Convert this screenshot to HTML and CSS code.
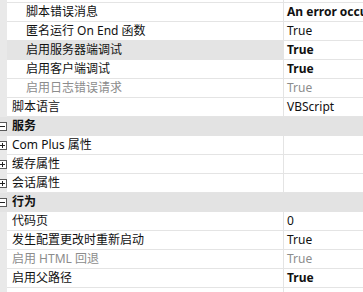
FILE: index.html
```html
<!DOCTYPE html>
<html>
<head>
<meta charset="utf-8">
<link rel="stylesheet" href="styles.css">
</head>
<body>
<div class="grid">
  <div class="row"><div class="strip"></div><div class="name l2"></div><div class="value"></div></div>
  <div class="row"><div class="strip"></div><div class="name l2">脚本错误消息</div><div class="value bold">An error occurred on the server when processing the URL.</div></div>
  <div class="row"><div class="strip"></div><div class="name l2">匿名运行 On End 函数</div><div class="value">True</div></div>
  <div class="row"><div class="strip"></div><div class="name l2 sel">启用服务器端调试</div><div class="value bold">True</div></div>
  <div class="row"><div class="strip"></div><div class="name l2">启用客户端调试</div><div class="value bold">True</div></div>
  <div class="row"><div class="strip"></div><div class="name l2 dis">启用日志错误请求</div><div class="value dis">True</div></div>
  <div class="row"><div class="strip"></div><div class="name l1">脚本语言</div><div class="value">VBScript</div></div>
  <div class="row cat"><div class="strip"><svg class="tog" width="9" height="9" viewBox="0 0 9 9"><rect x="0.5" y="0.5" width="8" height="8" fill="#fff" stroke="#5a5a5a"/><path d="M2 4.5h5" stroke="#222"/></svg></div><div class="name l1 bold">服务</div><div class="value"></div></div>
  <div class="row"><div class="strip"><svg class="tog" width="9" height="9" viewBox="0 0 9 9"><rect x="0.5" y="0.5" width="8" height="8" fill="#fff" stroke="#5a5a5a"/><path d="M2 4.5h5M4.5 2v5" stroke="#222"/></svg></div><div class="name l1">Com Plus 属性</div><div class="value"></div></div>
  <div class="row"><div class="strip"><svg class="tog" width="9" height="9" viewBox="0 0 9 9"><rect x="0.5" y="0.5" width="8" height="8" fill="#fff" stroke="#5a5a5a"/><path d="M2 4.5h5M4.5 2v5" stroke="#222"/></svg></div><div class="name l1">缓存属性</div><div class="value"></div></div>
  <div class="row"><div class="strip"><svg class="tog" width="9" height="9" viewBox="0 0 9 9"><rect x="0.5" y="0.5" width="8" height="8" fill="#fff" stroke="#5a5a5a"/><path d="M2 4.5h5M4.5 2v5" stroke="#222"/></svg></div><div class="name l1">会话属性</div><div class="value"></div></div>
  <div class="row cat"><div class="strip"><svg class="tog" width="9" height="9" viewBox="0 0 9 9"><rect x="0.5" y="0.5" width="8" height="8" fill="#fff" stroke="#5a5a5a"/><path d="M2 4.5h5" stroke="#222"/></svg></div><div class="name l1 bold">行为</div><div class="value"></div></div>
  <div class="row"><div class="strip"></div><div class="name l1">代码页</div><div class="value">0</div></div>
  <div class="row"><div class="strip"></div><div class="name l1">发生配置更改时重新启动</div><div class="value">True</div></div>
  <div class="row"><div class="strip"></div><div class="name l1 dis">启用 HTML 回退</div><div class="value dis">True</div></div>
  <div class="row"><div class="strip"></div><div class="name l1">启用父路径</div><div class="value bold">True</div></div>
  <div class="row"><div class="strip"></div><div class="name l1"></div><div class="value"></div></div>
</div>
</body>
</html>
```

FILE: styles.css
```css
html, body {
  margin: 0;
  padding: 0;
  background: #ffffff;
}
body {
  width: 363px;
  height: 292px;
  overflow: hidden;
  font-family: "Noto Sans", "Noto Sans CJK SC", sans-serif;
  font-size: 12px;
  color: #111;
}
.grid {
  display: flex;
  flex-direction: column;
  margin-top: -16px;
}
.row {
  display: flex;
  height: 19px;
  flex: 0 0 19px;
}
.strip {
  width: 7px;
  flex: 0 0 7px;
  background: #e9e9e9;
  display: flex;
  align-items: center;
  overflow: visible;
}
.tog {
  margin-left: -2px;
  flex: 0 0 9px;
  position: relative;
  z-index: 1;
}
.name {
  width: 276px;
  flex: 0 0 276px;
  box-sizing: border-box;
  border-bottom: 1px solid #e4e4e4;
  line-height: 18px;
  white-space: nowrap;
  overflow: hidden;
}
.l1 { padding-left: 5px; }
.l2 { padding-left: 19px; }
.value {
  flex: 1 1 auto;
  min-width: 0;
  box-sizing: border-box;
  border-left: 1px solid #e4e4e4;
  border-bottom: 1px solid #e4e4e4;
  padding-left: 3px;
  line-height: 18px;
  white-space: nowrap;
  overflow: hidden;
}
.bold { font-weight: 700; }
.dis { color: #8c8c8c; }
.sel { background: #e4e4e4; }
.cat .strip,
.cat .name,
.cat .value {
  background: #e3e3e3;
  border-color: #e3e3e3;
}
```
